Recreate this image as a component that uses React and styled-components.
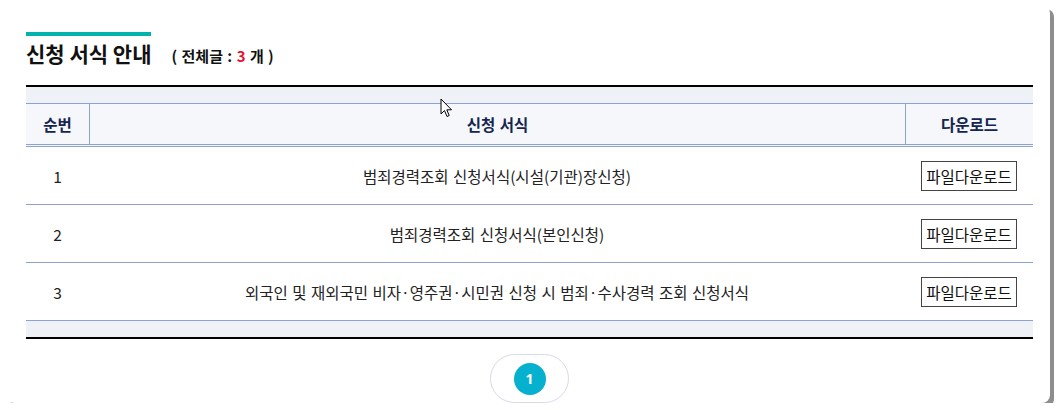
import React from "react";
import styled, { createGlobalStyle } from "styled-components";

const Global = createGlobalStyle`
  html, body { margin: 0; padding: 0; background: #fff; }
  body { font-family: "Noto Sans CJK KR", "Noto Sans", sans-serif; color: #222; }
`;

const Card = styled.div`
  position: relative;
  box-sizing: border-box;
  margin: 5px 0 0 6px;
  width: 1044px;
  height: 398px;
  padding: 27px 17px 0 20px;
  background: #fff;
  border-radius: 8px;
  box-shadow: 4px 4px 0 #8d8d8d;
  overflow: hidden;
`;

const TitleRow = styled.div`
  display: flex;
  align-items: baseline;
  gap: 20px;
  margin-bottom: 18px;
`;

const Title = styled.h2`
  margin: 0;
  display: inline-block;
  border-top: 4px solid #00b4ad;
  padding-top: 3px;
  font-size: 21px;
  line-height: 28px;
  font-weight: 700;
  color: #111;
`;

const Count = styled.span`
  font-size: 15px;
  font-weight: 700;
  color: #111;
  word-spacing: 1px;
`;

const Red = styled.em`
  font-style: normal;
  color: #e8112d;
`;

const Board = styled.div`
  border-top: 2px solid #000;
  border-bottom: 2px solid #000;
`;

const Band = styled.div`
  height: 16px;
  background: #eef2f7;
  border-${(p) => p.$side}: 1px solid #8ea2d2;
`;

const Row = styled.div`
  display: grid;
  grid-template-columns: 63px 816px 128px;
  height: ${(p) => (p.$head ? "40px" : "57px")};
  background: ${(p) => (p.$head ? "#f5f7fa" : "#fff")};
  border-bottom: ${(p) => (p.$head ? "3px double #8ea2d2" : "1px solid #8ea2d2")};
  &:last-of-type { border-bottom: ${(p) => (p.$head ? "3px double #8ea2d2" : "none")}; }
`;

const Cell = styled.div`
  display: flex;
  align-items: center;
  justify-content: center;
  font-size: 15.5px;
  word-spacing: 1px;
  font-weight: ${(p) => (p.$head ? 700 : 400)};
  color: ${(p) => (p.$head ? "#14254f" : "#222")};
  border-left: ${(p) => (p.$sep ? "1px solid #8ea2d2" : "none")};
  white-space: nowrap;
`;

const DownBtn = styled.button`
  box-sizing: border-box;
  width: 96px;
  height: 30px;
  padding: 0;
  background: #fff;
  border: 1px solid #444;
  font-family: inherit;
  font-size: 15.5px;
  color: #111;
  cursor: pointer;
`;

const Pager = styled.div`
  display: flex;
  justify-content: center;
  margin-top: 15px;
`;

const Pill = styled.div`
  box-sizing: border-box;
  width: 79px;
  height: 49px;
  border: 1px solid #d6dae8;
  border-radius: 25px;
  display: flex;
  align-items: center;
  justify-content: center;
`;

const PageNum = styled.span`
  width: 32px;
  height: 32px;
  border-radius: 50%;
  background: #06b1cf;
  color: #fff;
  font-family: "Noto Sans", sans-serif;
  font-weight: 700;
  font-size: 14px;
  display: flex;
  align-items: center;
  justify-content: center;
`;

const Cursor = styled.svg`
  position: absolute;
  left: 434px;
  top: 93px;
  pointer-events: none;
`;

const rows = [
  "범죄경력조회 신청서식(시설(기관)장신청)",
  "범죄경력조회 신청서식(본인신청)",
  "외국인 및 재외국민 비자·영주권·시민권 신청 시 범죄·수사경력 조회 신청서식",
];

export default function App() {
  return (
    <>
      <Global />
      <Card>
        <TitleRow>
          <Title>신청 서식 안내</Title>
          <Count>
            ( 전체글 : <Red>3</Red> 개 )
          </Count>
        </TitleRow>
        <Board>
          <Band $side="bottom" />
          <Row $head>
            <Cell $head>순번</Cell>
            <Cell $head $sep>신청 서식</Cell>
            <Cell $head $sep>다운로드</Cell>
          </Row>
          <div>
            {rows.map((t, i) => (
              <Row key={i}>
                <Cell>{i + 1}</Cell>
                <Cell>{t}</Cell>
                <Cell>
                  <DownBtn>파일다운로드</DownBtn>
                </Cell>
              </Row>
            ))}
          </div>
          <Band $side="top" />
        </Board>
        <Pager>
          <Pill>
            <PageNum>1</PageNum>
          </Pill>
        </Pager>
        <Cursor width="14" height="21" viewBox="0 0 14 21">
          <path d="M1 1 L1 16 L4.5 12.5 L7 18.5 L9.2 17.5 L6.8 11.8 L11.5 11.8 Z" fill="#fff" stroke="#000" strokeWidth="1" strokeLinejoin="miter" />
        </Cursor>
      </Card>
    </>
  );
}
